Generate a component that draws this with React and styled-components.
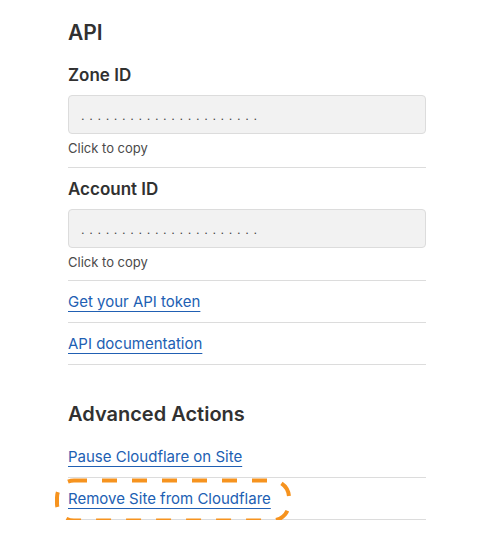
import styled, { createGlobalStyle } from "styled-components";

const GlobalStyle = createGlobalStyle`
  body {
    margin: 0;
    background: #ffffff;
    font-family: Inter, "Liberation Sans", Arial, sans-serif;
    color: #333333;
  }
`;

const Page = styled.div`
  width: 358px;
  padding: 20px 0 0 68px;
`;

const Title = styled.h2`
  margin: 0 0 9px;
  font-size: 21px;
  line-height: 25px;
  font-weight: 600;
  color: #313131;
`;

const SectionTitle = styled(Title)`
  margin: 37px 0 10px;
  font-size: 20px;
  line-height: 24px;
`;

const Field = styled.div`
  padding: 11px 0 10.5px;
  border-bottom: 1px solid #dcdcdc;
`;

const Label = styled.div`
  font-size: 17px;
  line-height: 20px;
  font-weight: 600;
  color: #313131;
  margin-bottom: 10px;
`;

const SecretBox = styled.div`
  box-sizing: border-box;
  height: 39px;
  padding: 0 12px;
  background: #f2f2f2;
  border: 1px solid #dcdcdc;
  border-radius: 4px;
  font-family: "Liberation Sans", Arial, sans-serif;
  font-size: 13px;
  line-height: 40px;
  letter-spacing: 4.6px;
  color: #444444;
  cursor: pointer;
`;

const Hint = styled.div`
  margin-top: 6px;
  font-size: 13px;
  line-height: 16px;
  color: #4a4a4a;
`;

const LinkRow = styled.div`
  position: relative;
  padding: 12px 0 11px;
  font-size: 15px;
  line-height: 18px;
  border-bottom: 1px solid #dcdcdc;
`;

const Link = styled.a`
  color: #2160b3;
  text-decoration: underline;
  text-decoration-thickness: 1px;
  text-underline-offset: 4px;
  cursor: pointer;
`;

const Highlight = styled.svg`
  position: absolute;
  left: -13px;
  top: 0;
  pointer-events: none;
`;

const dots = ".".repeat(22);

const SecretField = ({ label }) => (
  <Field>
    <Label>{label}</Label>
    <SecretBox>{dots}</SecretBox>
    <Hint>Click to copy</Hint>
  </Field>
);

export default function App() {
  return (
    <>
      <GlobalStyle />
      <Page>
        <Title>API</Title>
        <SecretField label="Zone ID" />
        <SecretField label="Account ID" />
        <LinkRow>
          <Link>Get your API token</Link>
        </LinkRow>
        <LinkRow>
          <Link>API documentation</Link>
        </LinkRow>

        <SectionTitle>Advanced Actions</SectionTitle>
        <LinkRow>
          <Link>Pause Cloudflare on Site</Link>
        </LinkRow>
        <LinkRow>
          <Link>Remove Site from Cloudflare</Link>
          <Highlight width="238" height="46" viewBox="0 0 238 46">
            <rect
              x="2"
              y="2.5"
              width="232"
              height="40"
              rx="17"
              fill="none"
              stroke="#f6931f"
              strokeWidth="4"
              strokeDasharray="15 15"
              strokeDashoffset="2"
            />
          </Highlight>
        </LinkRow>
      </Page>
    </>
  );
}
